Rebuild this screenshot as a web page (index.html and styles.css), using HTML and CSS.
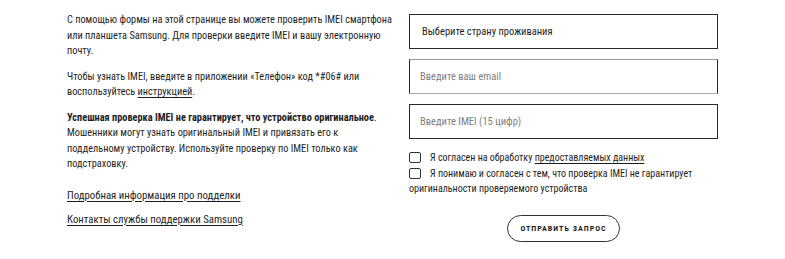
FILE: index.html
```html
<!DOCTYPE html>
<html lang="ru">
<head>
    <meta charset="UTF-8">
    <meta name="viewport" content="width=device-width, initial-scale=1.0">
    <link rel="stylesheet" href="styles.css">
</head>
<body>

<div class="imei-check">
    <div class="info">
        <p>С помощью формы на этой странице вы можете проверить IMEI смартфона или планшета Samsung. Для проверки введите IMEI и вашу электронную почту.</p>
        <p>Чтобы узнать IMEI, введите в приложении «Телефон» код *#06# или воспользуйтесь <a href="#">инструкцией</a>.</p>
        <p><b>Успешная проверка IMEI не гарантирует, что устройство оригинальное</b>. Мошенники могут узнать оригинальный IMEI и привязать его к поддельному устройству. Используйте проверку по IMEI только как подстраховку.</p>
        <div class="links">
            <a href="#">Подробная информация про подделки</a>
            <a href="#">Контакты службы поддержки Samsung</a>
        </div>
    </div>

    <form class="form">
        <div class="field field-select">Выберите страну проживания</div>
        <input type="text" class="field field-email" placeholder="Введите ваш email">
        <input type="text" class="field" placeholder="Введите IMEI (15 цифр)">

        <div class="agree">
            <label><span class="box"></span>Я согласен на обработку <a href="#">предоставляемых данных</a></label>
            <label><span class="box"></span>Я понимаю и согласен с тем, что проверка IMEI не гарантирует оригинальности проверяемого устройства</label>
        </div>

        <button type="button" class="send">Отправить запрос</button>
    </form>
</div>

</body>
</html>
```

FILE: styles.css
```css
body {
    margin: 0;
    padding: 0;
    background-color: #fff;
    font-family: "Liberation Sans Narrow", "Roboto Condensed", Roboto, sans-serif;
    color: #1e1e1e;
}

.imei-check {
    display: flex;
    gap: 16px;
    padding-left: 67px;
}

.info {
    width: 326px;
    padding-top: 12px;
    font-size: 10.3px;
    line-height: 15.5px;
}

.info p {
    margin: 0 0 10px 0;
}

.info b {
    font-weight: 700;
}

a {
    color: #1e1e1e;
    text-decoration: underline;
    text-underline-offset: 2px;
}

.links {
    display: flex;
    flex-direction: column;
    align-items: flex-start;
    gap: 8.5px;
    padding-top: 6px;
    font-size: 10.8px;
}

.form {
    width: 309px;
    padding-top: 14px;
    display: flex;
    flex-direction: column;
}

.field {
    box-sizing: border-box;
    height: 35px;
    margin: 0 0 10px 0;
    padding: 0 10px;
    border: 1.5px solid #2a2a2a;
    font-family: inherit;
    font-size: 10.5px;
    color: #1e1e1e;
    outline: none;
}

.field::placeholder {
    color: #808080;
}

.field-select {
    display: flex;
    align-items: center;
    padding-left: 12px;
}

.field-email {
    border-top-color: #999;
    border-bottom-color: #aaa;
}

.agree {
    padding-top: 1px;
    font-size: 10px;
    line-height: 15.5px;
}

.agree label {
    display: block;
}

.box {
    display: inline-block;
    box-sizing: border-box;
    width: 12px;
    height: 11px;
    margin-right: 9px;
    border: 1.5px solid #333;
    border-radius: 2px;
    vertical-align: -2px;
}

.send {
    align-self: center;
    margin-top: 18px;
    width: 113px;
    height: 27px;
    border: 1px solid #333;
    border-radius: 14px;
    background: #fff;
    font-family: inherit;
    font-size: 8px;
    font-weight: 700;
    letter-spacing: 1px;
    text-transform: uppercase;
    color: #1e1e1e;
    cursor: pointer;
}
```
